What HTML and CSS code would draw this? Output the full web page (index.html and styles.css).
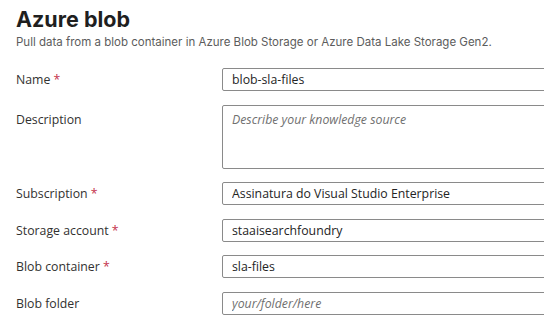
FILE: index.html
```html
<html><head>
<meta charset="UTF-8">
<title>Azure blob</title>
<link rel="stylesheet" href="styles.css">
</head>
<body>
    <div class="page">
        <h1>Azure blob</h1>
        <p class="intro">Pull data from a blob container in Azure Blob Storage or Azure Data Lake Storage Gen2.</p>

        <form class="form">
            <label class="field-label" for="name">Name <span class="req">*</span></label>
            <input class="field" id="name" type="text" value="blob-sla-files">

            <label class="field-label tall" for="desc">Description</label>
            <textarea class="field area" id="desc" placeholder="Describe your knowledge source"></textarea>

            <label class="field-label" for="sub">Subscription <span class="req">*</span></label>
            <input class="field" id="sub" type="text" value="Assinatura do Visual Studio Enterprise">

            <label class="field-label" for="acct">Storage account <span class="req">*</span></label>
            <input class="field" id="acct" type="text" value="staaisearchfoundry">

            <label class="field-label" for="cont">Blob container <span class="req">*</span></label>
            <input class="field" id="cont" type="text" value="sla-files">

            <label class="field-label" for="folder">Blob folder</label>
            <input class="field" id="folder" type="text" placeholder="your/folder/here">
        </form>
    </div>
</body></html>
```

FILE: styles.css
```css
* {
    margin: 0;
    padding: 0;
    box-sizing: border-box;
}

body {
    background: #ffffff;
    color: #242424;
    font-family: 'Open Sans', sans-serif;
    overflow: hidden;
}

.page {
    padding: 5px 0 0 16px;
    width: 560px;
}

h1 {
    font-family: 'Inter', sans-serif;
    font-size: 21.5px;
    font-weight: 700;
    line-height: 28px;
    color: #1f1f1f;
}

.intro {
    font-family: 'Inter', sans-serif;
    font-size: 11.5px;
    line-height: 16px;
    color: #5c5c5c;
    margin-top: 1px;
}

.form {
    display: grid;
    grid-template-columns: 206px 1fr;
    row-gap: 13.6px;
    margin-top: 18px;
}

.field-label {
    font-size: 12.3px;
    line-height: 23px;
    color: #323130;
}

.field-label.tall {
    padding-top: 3px;
}

.req {
    color: #c4314b;
}

.field {
    font-family: 'Open Sans', sans-serif;
    font-size: 12.3px;
    color: #242424;
    height: 23px;
    padding: 0 9px;
    border: 1px solid #8a8a8a;
    border-radius: 2px;
    background: #fff;
    outline: none;
}

.area {
    height: 64px;
    padding: 5px 9px;
    resize: none;
    line-height: 18px;
}

.field::placeholder {
    color: #707070;
    font-style: italic;
}
```
